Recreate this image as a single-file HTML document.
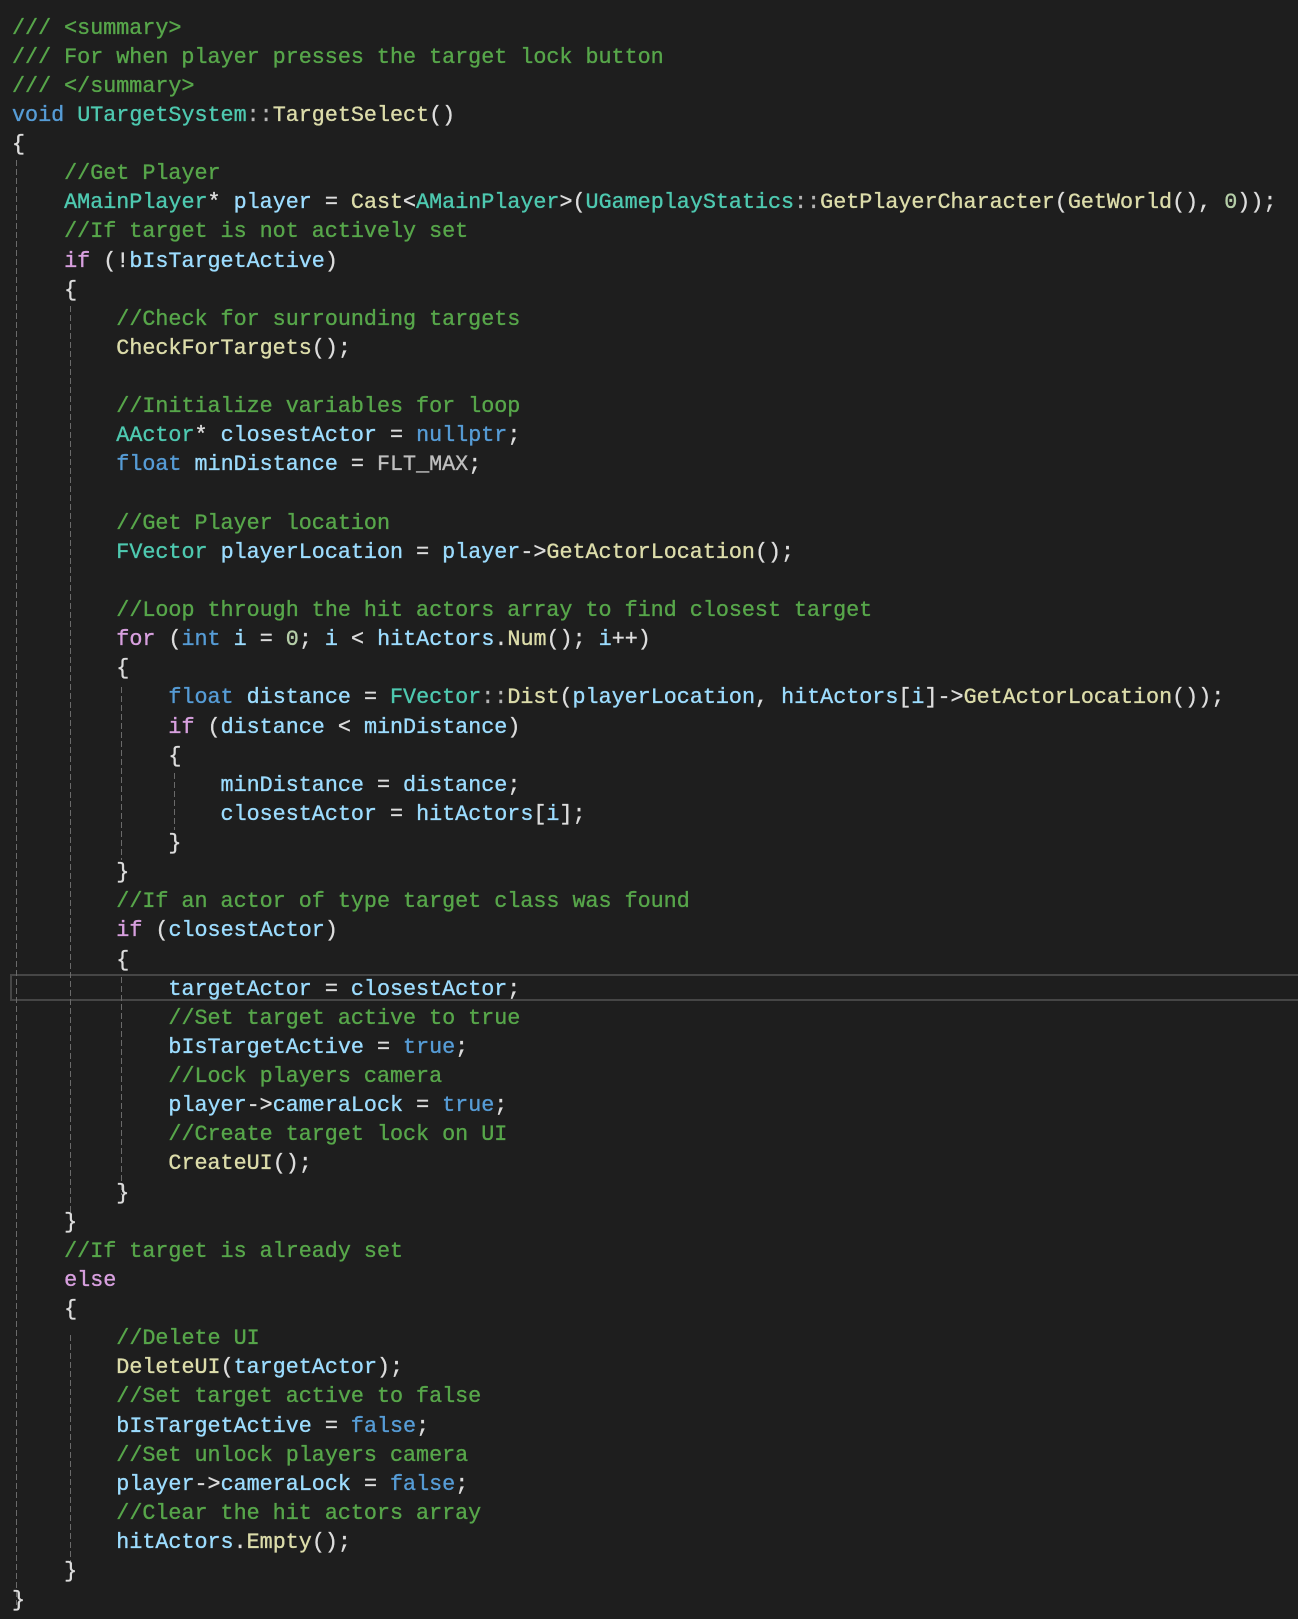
<!DOCTYPE html>
<html><head><meta charset="utf-8"><style>
html,body{margin:0;padding:0;background:#1e1e1e;width:1298px;height:1619px;overflow:hidden;position:relative}
pre{margin:0;position:absolute;left:12px;top:13.5px;font-family:"Liberation Mono",monospace;font-size:21.73px;line-height:29.12px;color:#dcdcdc;white-space:pre;-webkit-text-stroke:0.35px currentColor}
.c{color:#57a64a}.k{color:#569cd6}.t{color:#4ec9b0}.f{color:#dcdcaa}.v{color:#9cdcfe}.p{color:#d8a0df}.n{color:#b5cea8}.m{color:#bebebe}.g{color:#b4b4b4}
.gd{position:absolute;width:1px;background:repeating-linear-gradient(to bottom,#6a6a6a 0 6px,transparent 6px 9px)}
.hl{position:absolute;left:10px;top:974px;width:1300px;height:23px;border:2px solid #464646}
</style></head><body>
<div class="hl"></div>
<div class="gd" style="left:16px;top:160px;height:1445px"></div>
<div class="gd" style="left:70px;top:306px;height:918px"></div>
<div class="gd" style="left:70px;top:1335px;height:232px"></div>
<div class="gd" style="left:121px;top:687px;height:173px"></div>
<div class="gd" style="left:121px;top:977px;height:218px"></div>
<div class="gd" style="left:174px;top:773px;height:57px"></div>
<pre><span class="c">/// &lt;summary&gt;</span>
<span class="c">/// For when player presses the target lock button</span>
<span class="c">/// &lt;/summary&gt;</span>
<span class="k">void</span> <span class="t">UTargetSystem</span><span class="g">::</span><span class="f">TargetSelect</span>()
{
    <span class="c">//Get Player</span>
    <span class="t">AMainPlayer</span>* <span class="v">player</span> = <span class="f">Cast</span>&lt;<span class="t">AMainPlayer</span>&gt;(<span class="t">UGameplayStatics</span><span class="g">::</span><span class="f">GetPlayerCharacter</span>(<span class="f">GetWorld</span>(), <span class="n">0</span>));
    <span class="c">//If target is not actively set</span>
    <span class="p">if</span> (!<span class="v">bIsTargetActive</span>)
    {
        <span class="c">//Check for surrounding targets</span>
        <span class="f">CheckForTargets</span>();

        <span class="c">//Initialize variables for loop</span>
        <span class="t">AActor</span>* <span class="v">closestActor</span> = <span class="k">nullptr</span>;
        <span class="k">float</span> <span class="v">minDistance</span> = <span class="m">FLT_MAX</span>;

        <span class="c">//Get Player location</span>
        <span class="t">FVector</span> <span class="v">playerLocation</span> = <span class="v">player</span>-&gt;<span class="f">GetActorLocation</span>();

        <span class="c">//Loop through the hit actors array to find closest target</span>
        <span class="p">for</span> (<span class="k">int</span> <span class="v">i</span> = <span class="n">0</span>; <span class="v">i</span> &lt; <span class="v">hitActors</span>.<span class="f">Num</span>(); <span class="v">i</span>++)
        {
            <span class="k">float</span> <span class="v">distance</span> = <span class="t">FVector</span><span class="g">::</span><span class="f">Dist</span>(<span class="v">playerLocation</span>, <span class="v">hitActors</span>[<span class="v">i</span>]-&gt;<span class="f">GetActorLocation</span>());
            <span class="p">if</span> (<span class="v">distance</span> &lt; <span class="v">minDistance</span>)
            {
                <span class="v">minDistance</span> = <span class="v">distance</span>;
                <span class="v">closestActor</span> = <span class="v">hitActors</span>[<span class="v">i</span>];
            }
        }
        <span class="c">//If an actor of type target class was found</span>
        <span class="p">if</span> (<span class="v">closestActor</span>)
        {
            <span class="v">targetActor</span> = <span class="v">closestActor</span>;
            <span class="c">//Set target active to true</span>
            <span class="v">bIsTargetActive</span> = <span class="k">true</span>;
            <span class="c">//Lock players camera</span>
            <span class="v">player</span>-&gt;<span class="v">cameraLock</span> = <span class="k">true</span>;
            <span class="c">//Create target lock on UI</span>
            <span class="f">CreateUI</span>();
        }
    }
    <span class="c">//If target is already set</span>
    <span class="p">else</span>
    {
        <span class="c">//Delete UI</span>
        <span class="f">DeleteUI</span>(<span class="v">targetActor</span>);
        <span class="c">//Set target active to false</span>
        <span class="v">bIsTargetActive</span> = <span class="k">false</span>;
        <span class="c">//Set unlock players camera</span>
        <span class="v">player</span>-&gt;<span class="v">cameraLock</span> = <span class="k">false</span>;
        <span class="c">//Clear the hit actors array</span>
        <span class="v">hitActors</span>.<span class="f">Empty</span>();
    }
}</pre>
</body></html>
